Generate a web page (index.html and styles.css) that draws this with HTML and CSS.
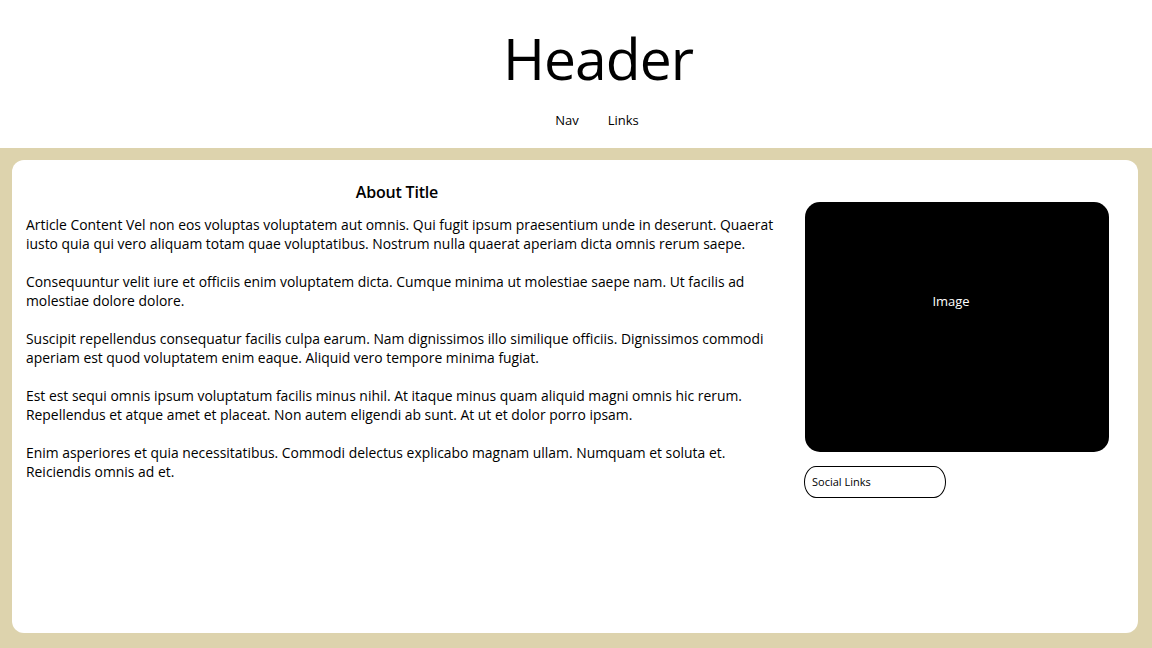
FILE: index.html
```html
<!DOCTYPE html>
<html lang="en">
<head>
<meta charset="utf-8">
<title>About</title>
<link rel="stylesheet" href="styles.css">
</head>
<body>
<header class="site-header">
  <h1 class="site-title">Header</h1>
  <nav class="site-nav">
    <a class="nav-link">Nav</a>
    <a class="nav-link">Links</a>
  </nav>
</header>
<section class="band">
  <div class="card">
    <article class="article">
      <h2 class="article-title">About Title</h2>
      <p>Article Content Vel non eos voluptas voluptatem aut omnis. Qui fugit ipsum praesentium unde in deserunt. Quaerat iusto quia qui vero aliquam totam quae voluptatibus. Nostrum nulla quaerat aperiam dicta omnis rerum saepe.</p>
      <p>Consequuntur velit iure et officiis enim voluptatem dicta. Cumque minima ut molestiae saepe nam. Ut facilis ad molestiae dolore dolore.</p>
      <p>Suscipit repellendus consequatur facilis culpa earum. Nam dignissimos illo similique officiis. Dignissimos commodi aperiam est quod voluptatem enim eaque. Aliquid vero tempore minima fugiat.</p>
      <p>Est est sequi omnis ipsum voluptatum facilis minus nihil. At itaque minus quam aliquid magni omnis hic rerum. Repellendus et atque amet et placeat. Non autem eligendi ab sunt. At ut et dolor porro ipsam.</p>
      <p>Enim asperiores et quia necessitatibus. Commodi delectus explicabo magnam ullam. Numquam et soluta et. Reiciendis omnis ad et.</p>
    </article>
    <aside class="aside">
      <div class="image-box">Image</div>
      <div class="social">Social Links</div>
    </aside>
  </div>
</section>
</body>
</html>
```

FILE: styles.css
```css
html, body {
  margin: 0;
  padding: 0;
  background: #ffffff;
}

body {
  font-family: "Open Sans", "DejaVu Sans", sans-serif;
  color: #000000;
}

.site-header {
  height: 148px;
  display: flex;
  flex-direction: column;
  align-items: center;
  padding-left: 44px;
  box-sizing: border-box;
}

.site-title {
  margin: 19px 0 0 0;
  font-size: 57px;
  font-weight: 400;
  line-height: 78px;
  letter-spacing: -1px;
}

.site-nav {
  display: flex;
  gap: 29px;
  margin-top: 14px;
  padding-right: 2px;
}

.nav-link {
  font-size: 13px;
  line-height: 18px;
  color: #000;
  text-decoration: none;
}

.band {
  background: #ddd3ad;
  padding: 12px 14px 15px 12px;
}

.card {
  background: #ffffff;
  border-radius: 12px;
  height: 473px;
  display: flex;
}

.article {
  width: 768px;
  padding: 0 4px 0 14px;
  box-sizing: border-box;
}

.article-title {
  margin: 21px 0 12px 0;
  text-align: center;
  font-size: 16px;
  font-weight: 600;
  line-height: 22px;
  letter-spacing: -0.2px;
  padding-right: 8px;
}

.article p {
  margin: 0 0 19px 0;
  font-size: 13.9px;
  line-height: 19px;
}

.aside {
  padding-top: 42px;
  padding-left: 25px;
  display: flex;
  flex-direction: column;
  align-items: flex-start;
}

.image-box {
  width: 304px;
  height: 250px;
  background: #000000;
  color: #ffffff;
  border-radius: 15px;
  box-sizing: border-box;
  padding-top: 89px;
  text-align: center;
  font-size: 13px;
  line-height: 20px;
  padding-right: 12px;
}

.social {
  margin-top: 14px;
  margin-left: -1px;
  width: 142px;
  height: 32px;
  box-sizing: border-box;
  border: 1px solid #000;
  border-radius: 12px / 16px;
  font-size: 11px;
  line-height: 30px;
  padding-left: 7px;
}
```
